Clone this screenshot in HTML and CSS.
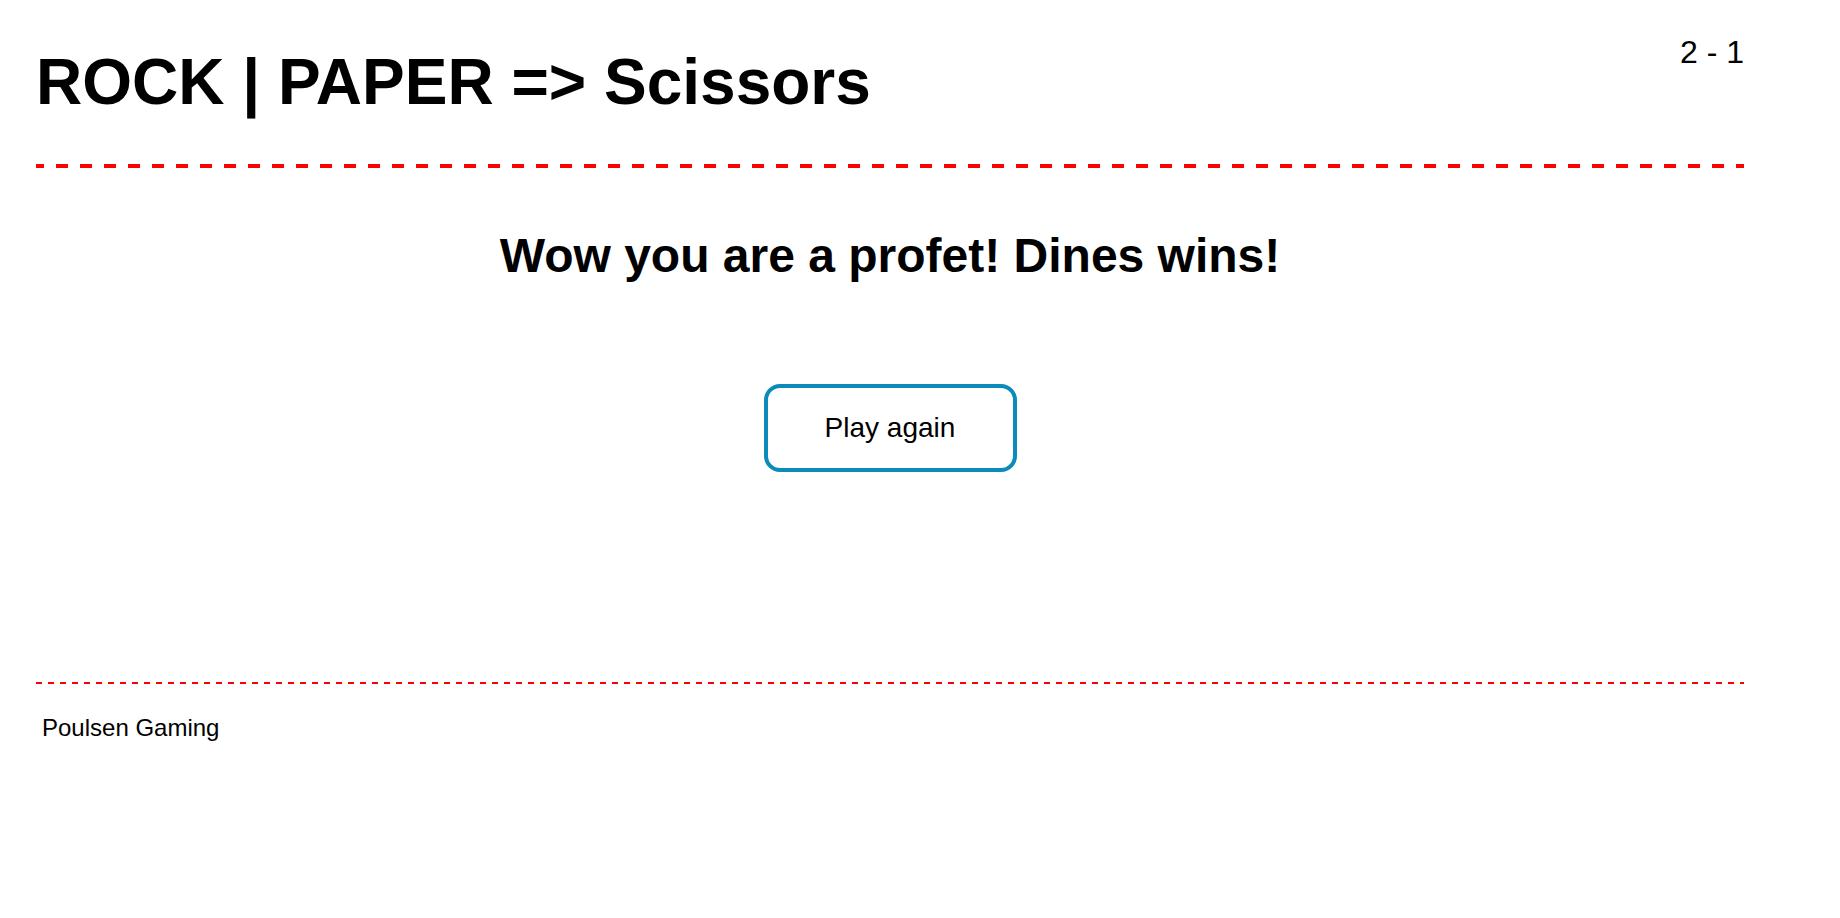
FILE: index.html
```html
<!DOCTYPE html>
<html lang="en">
<head>
<meta charset="utf-8">
<title>ROCK | PAPER => Scissors</title>
<link rel="stylesheet" href="styles.css">
</head>
<body>
<div class="page">
  <header class="header">
    <h1 class="title">ROCK | PAPER =&gt; Scissors</h1>
    <div class="score">2 - 1</div>
  </header>
  <div class="rule rule-thick"></div>
  <main class="main">
    <h2 class="message">Wow you are a profet! Dines wins!</h2>
    <button class="again" type="button">Play again</button>
  </main>
  <div class="rule rule-thin"></div>
  <footer class="footer">
    <p class="brand">Poulsen Gaming</p>
  </footer>
</div>
</body>
</html>
```

FILE: styles.css
```css
html, body {
  margin: 0;
  padding: 0;
  background: #ffffff;
}

body {
  font-family: "Liberation Sans", Arial, sans-serif;
  color: #000000;
}

.page {
  width: 1708px;
  margin-left: 36px;
}

.header {
  display: flex;
  justify-content: space-between;
  align-items: flex-start;
  padding-bottom: 45px;
}

.title {
  margin: 45px 0 0 0;
  font-size: 64px;
  line-height: 74px;
  font-weight: bold;
}

.score {
  margin-top: 34px;
  font-size: 32px;
  line-height: 37px;
}

.rule {
  width: 100%;
}

.rule-thick {
  height: 4px;
  background-image: repeating-linear-gradient(to right, #ff0000 0, #ff0000 12px, transparent 12px, transparent 24px);
  background-position: -4px 0;
}

.rule-thin {
  height: 2px;
  background-image: repeating-linear-gradient(to right, #ff0000 0, #ff0000 6px, transparent 6px, transparent 12px);
}

.main {
  display: flex;
  flex-direction: column;
  align-items: center;
  padding-bottom: 210px;
}

.message {
  margin: 60px 0 0 0;
  font-size: 48px;
  line-height: 55px;
  font-weight: bold;
}

.again {
  margin-top: 101px;
  width: 253px;
  height: 88px;
  box-sizing: border-box;
  padding: 0;
  border: 4px solid #0b8bb9;
  border-radius: 16px;
  background: #ffffff;
  color: #000000;
  font-family: "Liberation Sans", Arial, sans-serif;
  font-size: 28px;
  line-height: 32px;
}

.footer {
  padding: 30px 6px 0;
}

.brand {
  margin: 0;
  font-size: 24px;
  line-height: 28px;
}
```
